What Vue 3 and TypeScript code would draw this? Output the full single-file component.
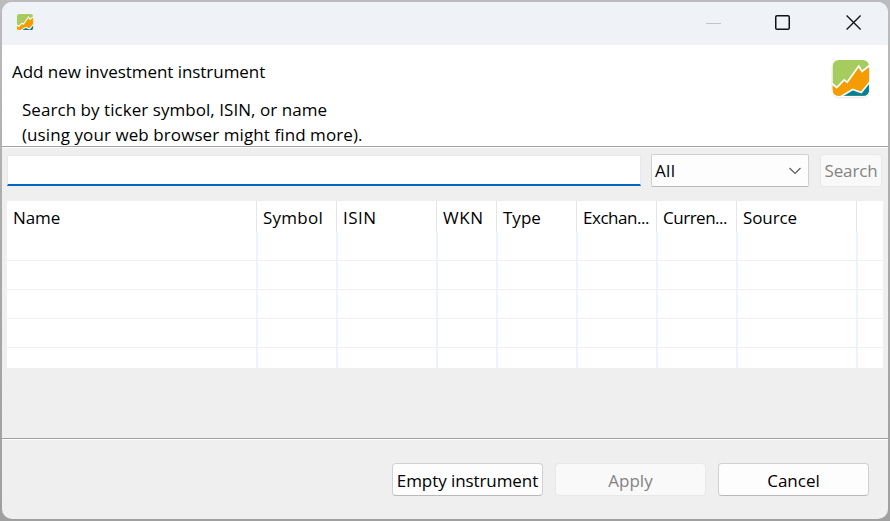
<script setup lang="ts">
import { ref } from 'vue'

interface Column {
  label: string
  key: string
}

const columns: Column[] = [
  { label: 'Name', key: 'name' },
  { label: 'Symbol', key: 'symbol' },
  { label: 'ISIN', key: 'isin' },
  { label: 'WKN', key: 'wkn' },
  { label: 'Type', key: 'type' },
  { label: 'Exchan...', key: 'exchange' },
  { label: 'Curren...', key: 'currency' },
  { label: 'Source', key: 'source' },
  { label: '', key: 'rest' },
]
const rowCount = 5
const query = ref<string>('')
</script>

<template>
  <div class="desktop">
    <main class="window">
      <header class="titlebar">
        <svg class="app-icon" viewBox="0 0 40 40">
          <rect x="0" y="0" width="40" height="40" rx="8" fill="#fff" stroke="#d5d9dc" />
          <rect x="2" y="2" width="36" height="36" rx="6" fill="#a6cb5f" />
          <path d="M2 27L6 30L13.500 22.500L16.500 25L28 9L31 14.500L38 9V32Q38 38 32 38H8Q2 38 2 32Z" fill="#f59c00" />
          <path d="M12 38L22 32L30.500 35L38 26V32Q38 38 32 38Z" fill="#00809d" />
          <path d="M1 26L6 30L13.500 22.500L16.500 25L28 9L31 14.500L39 8M11 38L22 32L30.500 35L39 25" fill="none" stroke="#fff" stroke-width="2.400" />
        </svg>
        <div class="controls">
          <svg width="16" height="16" viewBox="0 0 16 16"><path d="M0 8.5H15" stroke="#c0c3c7" /></svg>
          <svg width="16" height="16" viewBox="0 0 16 16"><rect x=".75" y=".75" width="13.5" height="13.5" rx="1.3" fill="none" stroke="#111" stroke-width="1.5" /></svg>
          <svg width="16" height="16" viewBox="0 0 16 16"><path d="M.6 .6L14.6 14.6M14.6 .6L.6 14.6" stroke="#15171a" stroke-width="1.4" /></svg>
        </div>
      </header>

      <section class="banner">
        <div class="copy">
          <h1><span class="t-title">Add new investment instrument</span></h1>
          <p><span class="t-line1">Search by ticker symbol, ISIN, or name</span><br /><span class="t-line2">(using your web browser might find more).</span></p>
        </div>
        <svg class="logo" viewBox="0 0 40 40">
          <rect x=".5" y="1.200" width="38.600" height="38" rx="7.500" fill="#e9e9e9" />
          <rect x="1" y=".3" width="37.600" height="37.900" rx="7" fill="#fff" />
          <rect x="1.700" y="1" width="36.300" height="35.800" rx="6" fill="#a6cb5f" />
          <path d="M1.700 25L5.700 28.500L13.200 20.800L16.200 23.300L27.800 7L31 12.500L38 7V30.800Q38 36.800 32 36.800H7.700Q1.700 36.800 1.700 30.800Z" fill="#f59c00" />
          <path d="M11 36.800L21.700 30.500L30.200 33.500L38 24V30.800Q38 36.800 32 36.800Z" fill="#00809d" />
          <path d="M1 24.500L5.700 28.500L13.200 20.800L16.200 23.300L27.800 7L31 12.500L38.600 6.500M10 37.400L21.700 30.500L30.200 33.500L38.600 23.300" fill="none" stroke="#fff" stroke-width="1.700" />
        </svg>
      </section>

      <section class="content">
        <div class="searchbar">
          <input v-model="query" class="query" type="text" aria-label="Search" />
          <button class="select" type="button">
            <span class="t-all">All</span>
            <svg width="12" height="8" viewBox="0 0 12 8"><path d="M.5 1L6 6.500L11.500 1" fill="none" stroke="#5c5c5c" stroke-width="1.200" /></svg>
          </button>
          <button class="btn search" type="button" disabled><span class="t-search">Search</span></button>
        </div>
        <div class="table">
          <div class="row head">
            <div v-for="c in columns" :key="c.key" class="cell"><span :class="'t-' + c.key">{{ c.label }}</span></div>
          </div>
          <div v-for="r in rowCount" :key="r" class="row body">
            <div v-for="c in columns" :key="c.key" class="cell"></div>
          </div>
        </div>
      </section>

      <footer class="actions">
        <button class="btn" type="button"><span class="t-empty">Empty instrument</span></button>
        <button class="btn" type="button" disabled><span class="t-apply">Apply</span></button>
        <button class="btn" type="button"><span class="t-cancel">Cancel</span></button>
      </footer>
    </main>
  </div>
</template>

<style>
body { margin: 0; overflow: hidden; }
</style>

<style scoped>
* { box-sizing: border-box; }
.desktop {
  width: 890px;
  height: 521px;
  padding: 2px;
  background: linear-gradient(#bcbcbc, #a9a9a9 50%, #a0a0a0);
  font: 17px/25px "Open Sans", "Noto Sans", sans-serif;
  color: #000;
}
.window {
  display: flex;
  flex-direction: column;
  width: 886px;
  height: 517px;
  border-radius: 10px;
  overflow: hidden;
  background: #efefef;
}
.titlebar {
  display: flex;
  align-items: flex-start;
  justify-content: space-between;
  height: 43px;
  flex: none;
  padding: 11px 26px 0 14px;
  background: #eff3f8;
}
.app-icon { width: 18px; height: 18px; }
.controls { display: flex; gap: 54px; padding-top: 2px; }
.controls svg { display: block; }
.controls svg:nth-child(2) { margin: 0 1px 0 -1px; }
.banner {
  display: flex;
  justify-content: space-between;
  flex: none;
  height: 102px;
  padding: 14px 17px 0 10px;
  background: #fff;
  border-bottom: 1px solid #a0a0a0;
}
h1, p { margin: 0; font-size: inherit; font-weight: 400; white-space: nowrap; }
p { padding: 13px 0 0 10px; }
.logo { width: 40px; height: 40px; }
.content {
  flex: none;
  height: 291px;
  padding: 6px 5px 0;
  border-top: 1px solid #fff;
}
.searchbar { display: flex; height: 33px; }
.query {
  width: 634px;
  height: 31px;
  margin: 1px 10px 0 0;
  padding: 0 5px;
  border: 1px solid #e9e9e9;
  border-bottom: 2px solid #0067c0;
  border-radius: 0;
  background: #fff;
  outline: none;
  font: inherit;
}
button { font: inherit; color: inherit; white-space: nowrap; }
.select {
  display: flex;
  align-items: center;
  justify-content: space-between;
  width: 158px;
  margin-right: 11px;
  padding: 0 7px 0 3px;
  border: 1px solid #d0d0d0;
  border-bottom-color: #b8b8b8;
  border-radius: 2px;
  background: #fdfdfd;
}
.btn {
  display: flex;
  align-items: center;
  justify-content: center;
  width: 151px;
  height: 33px;
  padding: 2px 0 0;
  border: 1px solid #d0d0d0;
  border-bottom-color: #b9b9b9;
  border-radius: 4px;
  background: #fdfdfd;
}
.btn:disabled { color: #838383; background: #f9f9f9; border-color: #e8e8e8; }
.btn.search { width: 62px; padding-top: 0; }
.table { width: 876px; height: 167px; margin-top: 14px; overflow: hidden; background: #fff; }
.row { display: grid; grid-template-columns: 249px 80px 100px 60px 80px 80px 80px 120px 27px; }
.head { height: 31px; }
.head .cell { padding: 4px 0 0 6px; border-left: 1px solid #e5e5e5; white-space: nowrap; }
.body { height: 29px; }
.body .cell { border-left: 2px solid #edf3fd; border-bottom: 1px solid #f0f0f0; }
.row .cell:first-child { border-left: 0; }
.actions {
  display: flex;
  justify-content: flex-end;
  gap: 12px;
  flex: 1;
  padding: 24px 19px 0;
  border-top: 1px solid #a0a0a0;
  box-shadow: inset 0 1px #fff;
}
.t-title { letter-spacing: -.05px; }
.t-line1 { letter-spacing: .05px; }
.t-line2 { letter-spacing: .085px; }
.t-all { letter-spacing: .3px; }
.t-symbol { letter-spacing: .25px; }
.t-isin { letter-spacing: .5px; }
.t-wkn { letter-spacing: .6px; }
.t-name, .t-source { letter-spacing: -.1px; }
.t-exchange, .t-currency { letter-spacing: -.48px; }
.t-empty { letter-spacing: -.08px; }
.t-search { letter-spacing: -.15px; }
</style>
